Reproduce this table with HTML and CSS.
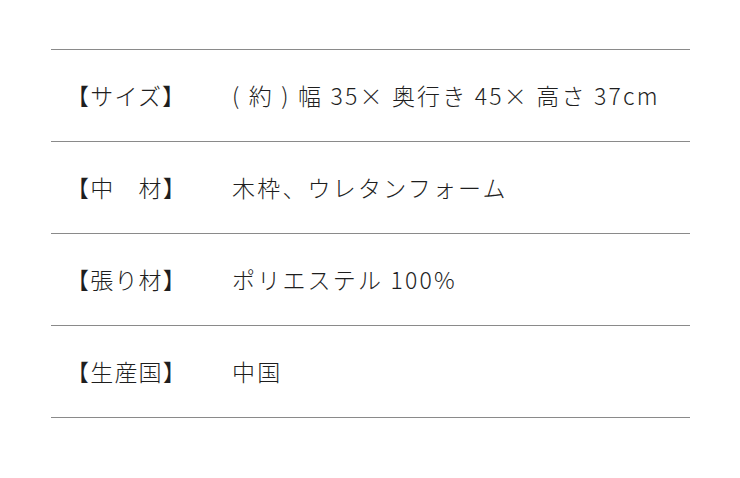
FILE: index.html
```html
<!DOCTYPE html>
<html lang="ja">
<head>
<meta charset="utf-8">
<link rel="stylesheet" href="styles.css">
</head>
<body>
<div class="spec">
  <div class="row"><div class="label">【サイズ】</div><div class="value">( 約 ) 幅 35× 奥行き 45× 高さ 37cm</div></div>
  <div class="row"><div class="label">【中　材】</div><div class="value">木枠、ウレタンフォーム</div></div>
  <div class="row"><div class="label">【張り材】</div><div class="value">ポリエステル 100%</div></div>
  <div class="row"><div class="label">【生産国】</div><div class="value">中国</div></div>
</div>
</body>
</html>
```
FILE: styles.css
```css
html, body {
  margin: 0;
  padding: 0;
  background: #fff;
}
body {
  font-family: "Noto Sans CJK JP", "Noto Sans", sans-serif;
  font-weight: 300;
  color: #1e1e1e;
}
.spec {
  margin: 49px 0 0 51px;
  width: 639px;
  border-bottom: 1px solid #8a8a8a;
}
.row {
  display: flex;
  align-items: center;
  height: 91px;
  border-top: 1px solid #8a8a8a;
  font-size: 23px;
}
.label {
  width: 166px;
  padding-left: 15px;
  flex-shrink: 0;
  padding-bottom: 2px;
  letter-spacing: 1.2px;
}
.value {
  flex: 1;
  padding-bottom: 2px;
  letter-spacing: 2.2px;
}
```
